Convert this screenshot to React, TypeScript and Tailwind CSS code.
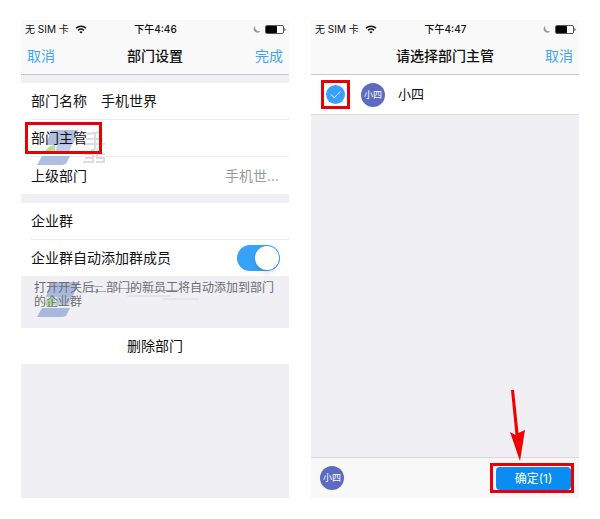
import type { ReactNode } from 'react';

function WifiIcon() {
  return (
    <svg viewBox="0 0 12 9" className="h-[9px] w-3" fill="none" stroke="#111" strokeWidth="1.5" aria-hidden="true">
      <path d="M1 3.2C3.8.6 8.2.6 11 3.2" />
      <path d="M3 5.3c1.8-1.5 4.2-1.5 6 0" />
      <path d="M6 8.6 4.3 6.9c1-.8 2.4-.8 3.4 0z" fill="#111" stroke="none" />
    </svg>
  );
}

function MoonIcon() {
  return (
    <svg viewBox="0 0 8 8" className="h-2 w-2" fill="#999" aria-hidden="true">
      <path d="M2.4.8A3.7 3.7 0 1 0 7.4 6 4 4 0 0 1 2.4.8z" />
    </svg>
  );
}

function BatteryIcon() {
  return (
    <svg viewBox="0 0 21 9" className="h-[9px] w-[21px]" aria-hidden="true">
      <rect x=".5" y=".5" width="18" height="8" rx="1.5" fill="#fff" stroke="#555" />
      <rect x="1" y="1" width="11" height="7" rx=".8" fill="#000" />
      <path d="M19.5 3c1.3.3 1.3 2.7 0 3z" fill="#222" />
    </svg>
  );
}

function LogoMark() {
  return (
    <svg viewBox="0 0 42 36" className="h-9 w-[42px] shrink-0" aria-hidden="true">
      <path d="M14 0h27l-4 12q-1 3-5 3H9z" fill="#7995cf" opacity=".6" />
      <path d="M7 22l6-6 5-1v8l-8 1z" fill="#8fd56c" opacity=".7" />
      <path d="M20 15h15l-3 7q-1 2-4 2H18z" fill="#7995cf" opacity=".45" />
      <path d="M5 26h28l-3 6q-1 3-5 3H0z" fill="#7995cf" opacity=".6" />
    </svg>
  );
}

interface PhoneProps {
  time: string;
  title: string;
  left?: string;
  right: string;
  children: ReactNode;
}

function Phone({ time, title, left, right, children }: PhoneProps) {
  return (
    <section className="flex min-w-0 flex-1 flex-col bg-[#efeff4]">
      <header className="border-b border-[#c8c8cb] bg-[#f9f9f9]">
        <div className="grid h-[18px] grid-cols-[1fr_auto_1fr] items-center pr-[3px] pl-1 text-[10px]">
          <span className="flex items-center gap-1.5">无 SIM 卡 <WifiIcon /></span>
          <span className="font-medium">{time}</span>
          <span className="flex items-center justify-end gap-1"><MoonIcon /><BatteryIcon /></span>
        </div>
        <div className="grid h-9 grid-cols-[1fr_auto_1fr] items-center px-1.5 text-sm">
          {left ? <button className="justify-self-start text-[#3ba7f5]">{left}</button> : <span />}
          <h1 className="font-medium">{title}</h1>
          <button className="justify-self-end text-[#3ba7f5]">{right}</button>
        </div>
      </header>
      {children}
    </section>
  );
}

function Avatar() {
  return (
    <span className="flex size-6 items-center justify-center rounded-full bg-[#5c6bc0] text-[9px] text-white">小四</span>
  );
}

function DepartmentSettings() {
  return (
    <Phone time="下午4:46" title="部门设置" left="取消" right="完成">
      <div className="mt-2 bg-white pl-2.5 text-sm">
        <label className="flex h-9 items-center gap-3.5">
          部门名称
          <input className="min-w-0 flex-1 outline-none" defaultValue="手机世界" />
        </label>
        <div className="relative flex h-[38px] items-center border-y border-[#ececee]">
          <div className="pointer-events-none absolute top-2.5 left-1.5 flex gap-1" aria-hidden="true">
            <LogoMark />
            <svg viewBox="0 0 24 36" className="h-9 w-6" fill="none" stroke="#dcdcdf" strokeWidth="2">
              <path d="M4 4l14-2M3 9h17M1 14h21M12 3v15q0 2-4 2" />
              <path d="M1 24h9v8H0M2 28h8M22 24h-8v4h7v4h-8" />
            </svg>
          </div>
          <button className="relative -ml-1.5 h-8 w-[77px] border-3 border-[#e60008] pl-[3px] text-left">部门主管</button>
        </div>
        <div className="flex h-[37px] items-center justify-between pr-2.5">
          上级部门
          <span className="text-[#999]">手机世...</span>
        </div>
      </div>

      <div className="mt-[9px] bg-white pl-2.5 text-sm">
        <div className="flex h-[37px] items-center border-b border-[#ececee]">企业群</div>
        <label className="flex h-9 items-center justify-between pr-[9px]">
          企业群自动添加群成员
          <input
            type="checkbox"
            defaultChecked
            className="flex h-[26px] w-[43px] appearance-none items-center rounded-full bg-[#ddd] p-px before:size-6 before:rounded-full before:bg-white before:shadow-md checked:justify-end checked:bg-[#38a1fa]"
          />
        </label>
      </div>
      <div className="relative h-[52px] px-[13px] pt-[5px]">
        <div className="pointer-events-none absolute top-1.5 left-4 flex gap-2" aria-hidden="true">
          <LogoMark />
          <svg viewBox="0 0 120 20" className="h-5 w-[120px]" fill="none" stroke="#a9a9b0" strokeWidth="1">
            <path d="M4 4.500h12M2 9.500h17M30 6.500h22M60 8.500h32" />
            <path d="M40 14h44M76 17h36" stroke="#e4e4e9" strokeWidth="2" />
          </svg>
        </div>
        <p className="relative text-xs leading-[14px] text-[#6d6d72]">打开开关后，部门的新员工将自动添加到部门的企业群</p>
      </div>

      <button className="h-9 bg-white text-sm">删除部门</button>
    </Phone>
  );
}

function SupervisorPicker() {
  return (
    <Phone time="下午4:47" title="请选择部门主管" right="取消">
      <label className="flex h-10 items-center border-b border-[#dcdcdf] bg-white pl-2.5 text-[13px]">
        <span className="grid size-[29px] place-items-center border-3 border-[#e60008]">
          <input
            type="checkbox"
            defaultChecked
            className="col-start-1 row-start-1 size-[19px] appearance-none rounded-full border border-[#ccc] checked:border-0 checked:bg-[#38a1fa]"
          />
          <svg viewBox="0 0 19 19" className="pointer-events-none col-start-1 row-start-1 size-[19px]" fill="none" stroke="#fff" strokeWidth="1" aria-hidden="true">
            <path d="M5 9.5l3.2 3.2L14.5 6.500" />
          </svg>
        </span>
        <span className="mr-[13px] ml-[11px]"><Avatar /></span>
        小四
      </label>

      <footer className="relative mt-auto flex h-[41px] items-center justify-between border-t border-[#d8d8db] bg-[#f8f8f8] pr-[5px] pl-[9px]">
        <Avatar />
        <div className="border-3 border-[#e60008] pt-px pl-[3px]">
          <button className="block h-[23px] w-[75px] rounded bg-[#0a8cf0] text-xs text-white">确定(1)</button>
        </div>
        <svg viewBox="0 0 16 72" className="pointer-events-none absolute right-[54px] bottom-9 h-[72px] w-4" fill="#f00000" aria-hidden="true">
          <path d="M2 0h3l4.500 43 6.500-3-5 31L1 42l5.500 3z" />
        </svg>
      </footer>
    </Phone>
  );
}

export default function App() {
  return (
    <main className="flex min-h-screen gap-[22px] bg-white px-[21px] pt-5 pb-[21px] font-[Inter,'Noto_Sans_CJK_SC',sans-serif] text-[#111]">
      <DepartmentSettings />
      <SupervisorPicker />
    </main>
  );
}
